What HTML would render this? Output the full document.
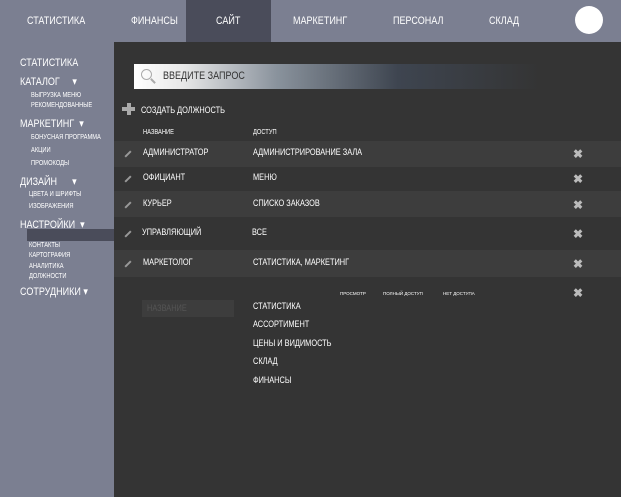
<!DOCTYPE html>
<html><head><meta charset="utf-8"><style>
*{margin:0;padding:0;box-sizing:border-box}
body{width:621px;height:497px;overflow:hidden;background:#7b7f91;font-family:"Liberation Sans",sans-serif;color:#fff;position:relative}
.a{position:absolute;white-space:nowrap}
.c{transform:scaleX(.82);transform-origin:0 0}
.nav{font-size:11px;top:15px;color:#fff}
.main{position:absolute;left:114px;top:42px;width:507px;height:455px;background:#343434}
.row{position:absolute;left:0;width:507px}
.s{font-size:11px}
.r{font-size:9px}
.tiny{font-size:7px}
.x{position:absolute;left:459px;font-size:12px;color:#bbb;font-weight:bold}
.pen{position:absolute;left:10px;width:8px;height:2px;background:#999;transform:rotate(-45deg)}
</style></head><body>
<div class="a" style="left:186px;top:0;width:85px;height:42px;background:#4a4c5a"></div>
<div class="a nav c" style="left:27px">СТАТИСТИКА</div>
<div class="a nav c" style="left:131px">ФИНАНСЫ</div>
<div class="a nav c" style="left:216px">САЙТ</div>
<div class="a nav c" style="left:293px">МАРКЕТИНГ</div>
<div class="a nav c" style="left:393px">ПЕРСОНАЛ</div>
<div class="a nav c" style="left:489px">СКЛАД</div>
<div class="a" style="left:575px;top:6px;width:28px;height:28px;border-radius:50%;background:#fff"></div>

<div class="a" style="left:27px;top:229px;width:87px;height:12px;background:#4a4c5a"></div>
<div class="a s c" style="left:20px;top:57px">СТАТИСТИКА</div>
<div class="a s c" style="left:20px;top:75px">КАТАЛОГ &nbsp; &nbsp; ▾</div>
<div class="a tiny c" style="left:31px;top:92px">ВЫГРУЗКА МЕНЮ</div>
<div class="a tiny c" style="left:31px;top:102px">РЕКОМЕНДОВАННЫЕ</div>
<div class="a s c" style="left:20px;top:117px">МАРКЕТИНГ &nbsp;▾</div>
<div class="a tiny c" style="left:31px;top:134px">БОНУСНАЯ ПРОГРАММА</div>
<div class="a tiny c" style="left:31px;top:147px">АКЦИИ</div>
<div class="a tiny c" style="left:31px;top:160px">ПРОМОКОДЫ</div>
<div class="a s c" style="left:20px;top:175px">ДИЗАЙН &nbsp; &nbsp; &nbsp;▾</div>
<div class="a tiny c" style="left:29px;top:191px">ЦВЕТА И ШРИФТЫ</div>
<div class="a tiny c" style="left:29px;top:203px">ИЗОБРАЖЕНИЯ</div>
<div class="a s c" style="left:20px;top:218px">НАСТРОЙКИ &nbsp;▾</div>
<div class="a tiny c" style="left:29px;top:242px">КОНТАКТЫ</div>
<div class="a tiny c" style="left:29px;top:252px">КАРТОГРАФИЯ</div>
<div class="a tiny c" style="left:29px;top:263px">АНАЛИТИКА</div>
<div class="a tiny c" style="left:29px;top:273px">ДОЛЖНОСТИ</div>
<div class="a s c" style="left:20px;top:285px">СОТРУДНИКИ ▾</div>

<div class="main">
<div class="a" style="left:20px;top:22px;width:406px;height:25px;background:linear-gradient(90deg,#fff 0%,#e8e8e8 12%,#8a939d 35%,#3e4550 65%,#343434 100%)"></div>
<div class="a" style="left:27px;top:27px;width:11px;height:11px;border:1.5px solid #aaa;border-radius:50%"></div>
<div class="a" style="left:36px;top:38px;width:6px;height:2px;background:#aaa;transform:rotate(45deg)"></div>
<div class="a c" style="left:49px;top:28px;font-size:11px;color:#333">ВВЕДИТЕ ЗАПРОС</div>
<div class="a" style="left:8px;top:65px;width:13px;height:4px;background:#aaa"></div>
<div class="a" style="left:12.5px;top:61px;width:4px;height:12px;background:#aaa"></div>
<div class="a r c" style="left:27px;top:63px">СОЗДАТЬ ДОЛЖНОСТЬ</div>
<div class="a tiny c" style="left:29px;top:87px">НАЗВАНИЕ</div>
<div class="a tiny c" style="left:139px;top:87px">ДОСТУП</div>

<div class="row" style="top:99px;height:26px;background:#3d3d3d"></div>
<div class="row" style="top:149px;height:26px;background:#3d3d3d"></div>
<div class="row" style="top:208px;height:27px;background:#3d3d3d"></div>

<div class="pen" style="top:111px"></div><div class="a r c" style="left:29px;top:105px">АДМИНИСТРАТОР</div><div class="a r c" style="left:139px;top:105px">АДМИНИСТРИРОВАНИЕ ЗАЛА</div><div class="x" style="top:105px">✖</div>
<div class="pen" style="top:136px"></div><div class="a r c" style="left:29px;top:130px">ОФИЦИАНТ</div><div class="a r c" style="left:139px;top:130px">МЕНЮ</div><div class="x" style="top:130px">✖</div>
<div class="pen" style="top:162px"></div><div class="a r c" style="left:29px;top:156px">КУРЬЕР</div><div class="a r c" style="left:139px;top:156px">СПИСКО ЗАКАЗОВ</div><div class="x" style="top:156px">✖</div>
<div class="pen" style="top:191px"></div><div class="a r c" style="left:28px;top:185px">УПРАВЛЯЮЩИЙ</div><div class="a r c" style="left:138px;top:185px">ВСЕ</div><div class="x" style="top:185px">✖</div>
<div class="pen" style="top:221px"></div><div class="a r c" style="left:29px;top:215px">МАРКЕТОЛОГ</div><div class="a r c" style="left:139px;top:215px">СТАТИСТИКА, МАРКЕТИНГ</div><div class="x" style="top:215px">✖</div>

<div class="a" style="left:226px;top:249px;font-size:4.5px">ПРОСМОТР</div>
<div class="a" style="left:269px;top:249px;font-size:4.5px">ПОЛНЫЙ ДОСТУП</div>
<div class="a" style="left:329px;top:249px;font-size:4.5px">НЕТ ДОСТУПА</div>
<div class="x" style="top:244px">✖</div>
<div class="a" style="left:28px;top:258px;width:92px;height:17px;background:#3d3d3d"></div>
<div class="a r c" style="left:33px;top:261px;color:#555">НАЗВАНИЕ</div>
<div class="a r c" style="left:139px;top:259px">СТАТИСТИКА</div>
<div class="a r c" style="left:139px;top:277px">АССОРТИМЕНТ</div>
<div class="a r c" style="left:139px;top:296px">ЦЕНЫ И ВИДИМОСТЬ</div>
<div class="a r c" style="left:139px;top:314px">СКЛАД</div>
<div class="a r c" style="left:139px;top:333px">ФИНАНСЫ</div>
</div>
</body></html>
